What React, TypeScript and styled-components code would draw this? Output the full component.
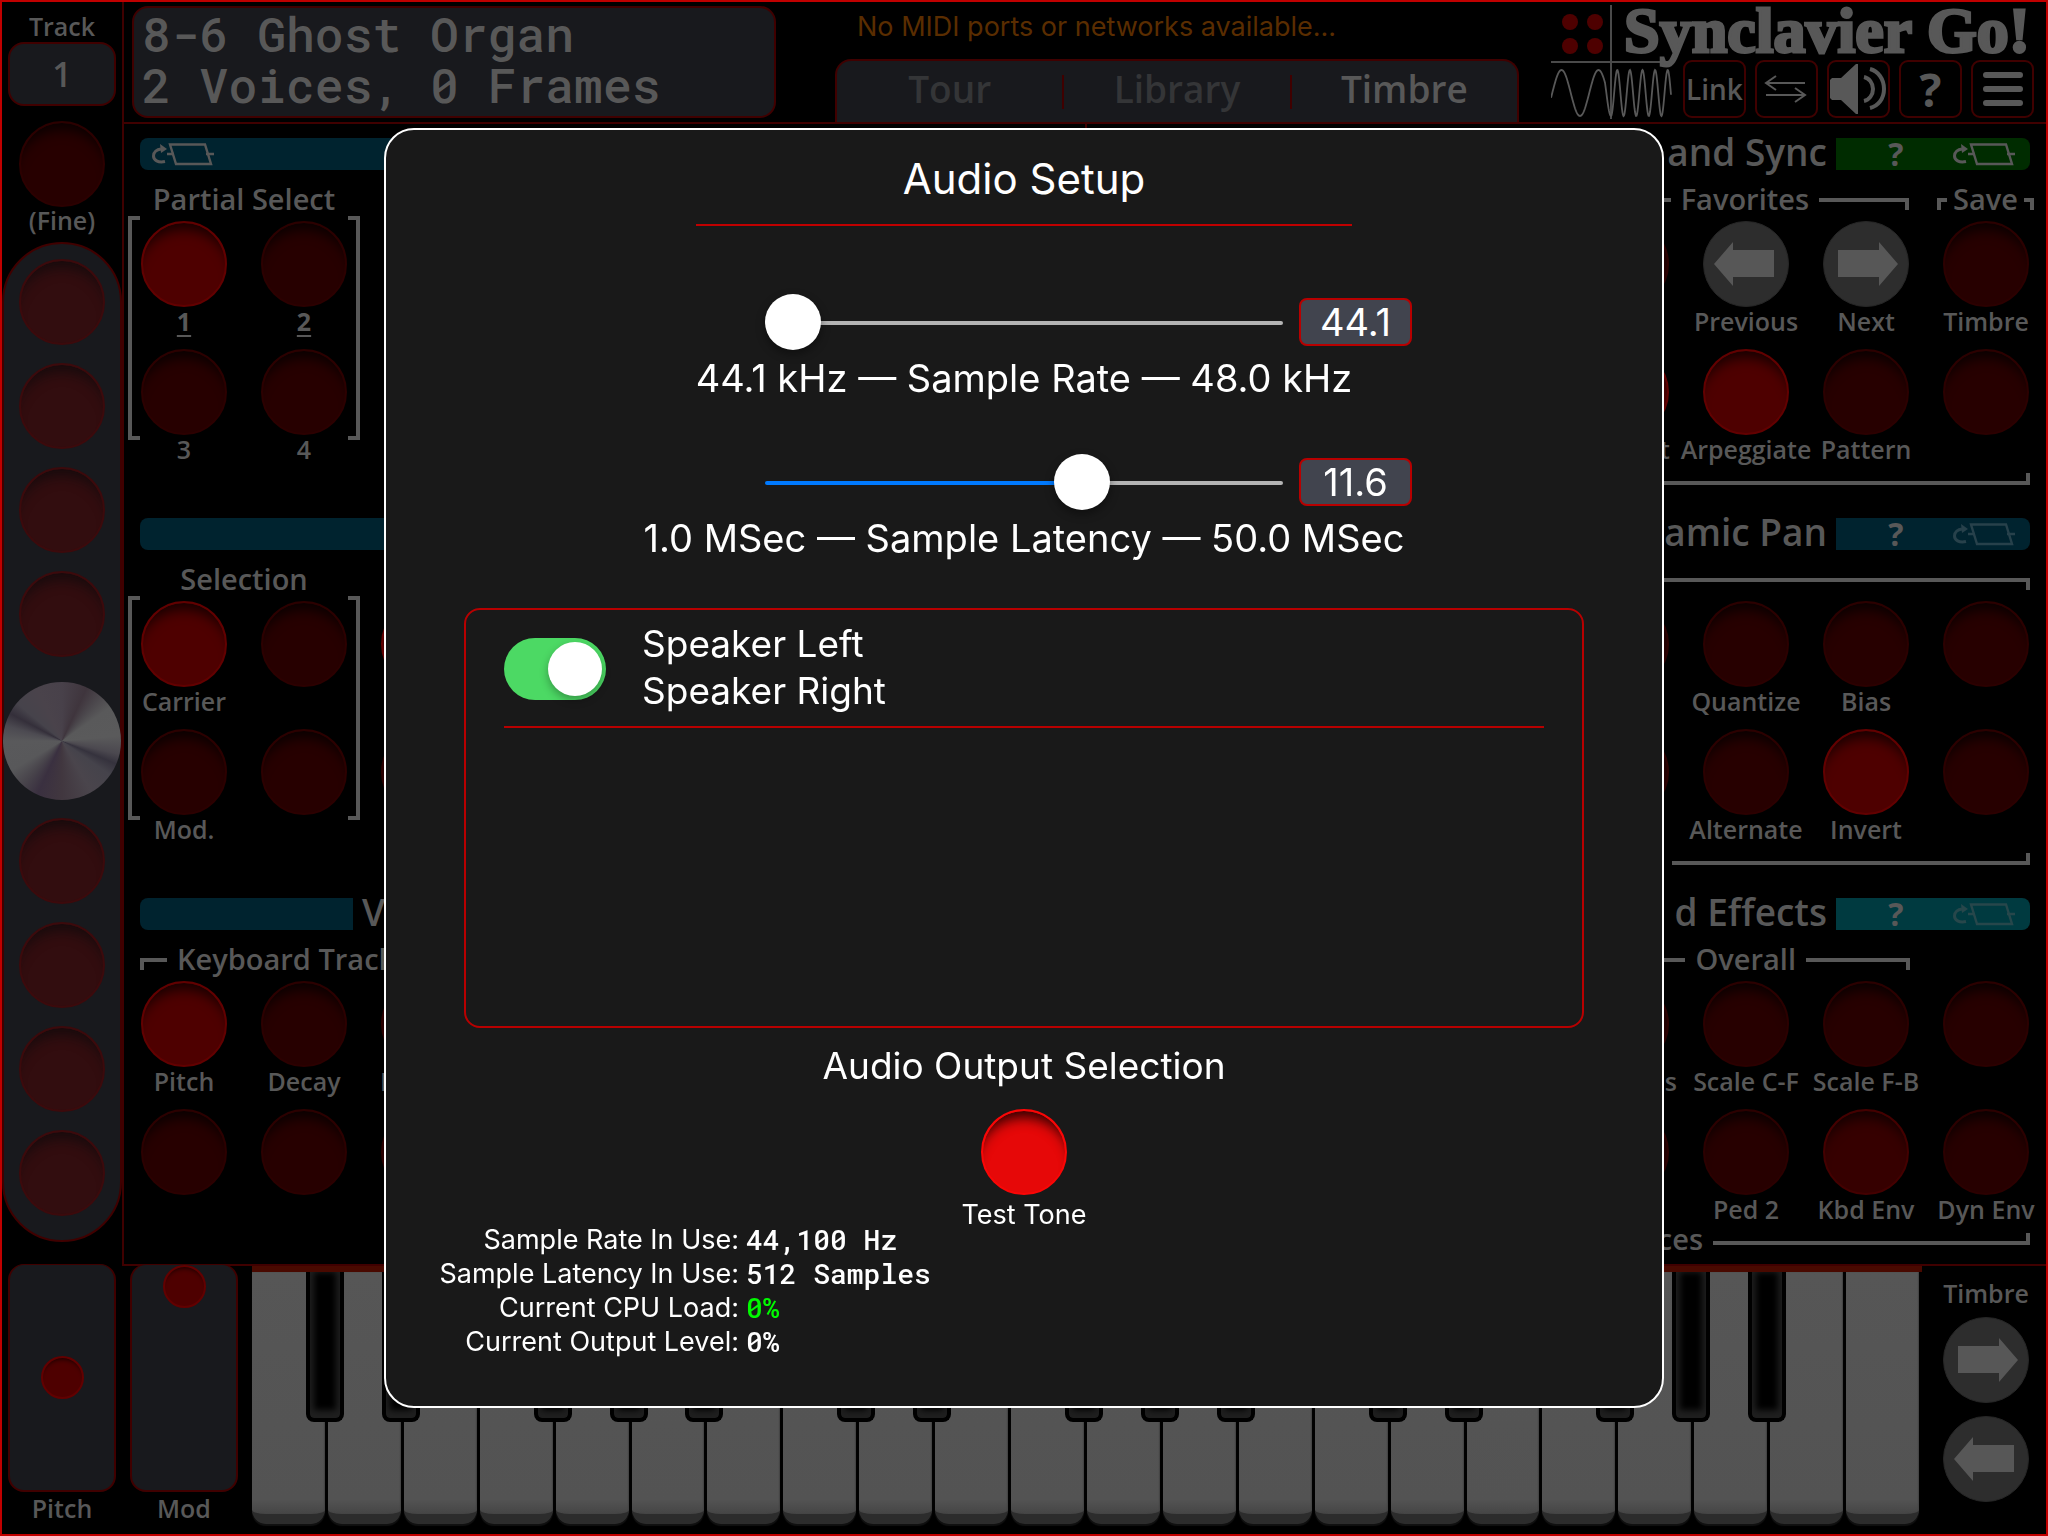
import React, { useState } from "react";
import styled, { createGlobalStyle, css } from "styled-components";

const ink = "#585858";
const rim = "#400000";
const slate = "#18191d";
const redLine = "#c00000";

const GlobalStyle = createGlobalStyle`
  *, *::before, *::after { box-sizing: border-box; }
  body { margin: 0; background: #000; font-family: "Open Sans", "Noto Sans", sans-serif; color: ${ink}; }
  button, input { font: inherit; color: inherit; padding: 0; margin: 0; }
  button { background: none; border: 0; cursor: pointer; }
`;

const Frame = styled.div`
  display: flex;
  flex-direction: column;
  min-height: 100vh;
  background: #000;
  border: 2px solid ${redLine};
  font-weight: 600;
`;

const Upper = styled.div`
  display: flex;
`;

/* ---------- lamp buttons ---------- */

type Tone = "off" | "dim" | "on" | "ribbon" | "live";

const tones: Record<Tone, { face: string; edge: string; shade: string }> = {
  off: { face: "#270000", edge: "#2c0000", shade: "rgba(0, 0, 0, 0.8)" },
  dim: { face: "#360000", edge: "#440000", shade: "rgba(0, 0, 0, 0.7)" },
  on: { face: "#4e0000", edge: "#620000", shade: "rgba(0, 0, 0, 0.75)" },
  ribbon: { face: "#320d0f", edge: "#3c0a0c", shade: "rgba(10, 10, 12, 0.7)" },
  live: { face: "#e60808", edge: "#fa0606", shade: "rgba(20, 0, 0, 0.9)" },
};

const Lamp = styled.button<{ $tone: Tone; $small?: boolean }>`
  flex: none;
  width: ${(p) => (p.$small ? 43 : 86)}px;
  height: ${(p) => (p.$small ? 43 : 86)}px;
  border-radius: 50%;
  border: 2px solid ${(p) => tones[p.$tone].edge};
  background: ${(p) => tones[p.$tone].face};
  box-shadow: ${(p) => (p.$small ? "inset 0 5px 5px -4px" : "inset 0 15px 13px -9px")}
    ${(p) => tones[p.$tone].shade};
`;

const RoundButton = styled.button`
  flex: none;
  display: grid;
  place-items: center;
  width: 86px;
  height: 86px;
  border-radius: 50%;
  background: #2d2d2d;
  border: 1px solid #262626;
`;

function Arrow({ back }: { back?: boolean }) {
  return (
    <svg width="84" height="84" viewBox="-42 -42 84 84" aria-hidden="true">
      <path
        d={
          back
            ? "M-32 0L-13 -22V-14H28V13H-13V22Z"
            : "M32 0L13 -22V-14H-28V13H13V22Z"
        }
        fill="#575757"
      />
    </svg>
  );
}

/* ---------- sidebar ---------- */

const Sidebar = styled.aside`
  flex: none;
  display: flex;
  flex-direction: column;
  align-items: center;
  width: 122px;
  padding: 8px 0 24px;
  border-right: 2px solid ${rim};
  font-size: 25px;
`;

const TrackLabel = styled.label`
  display: flex;
  flex-direction: column;
  align-items: center;
  line-height: 32px;
`;

const TrackBox = styled.button`
  width: 108px;
  height: 64px;
  margin-bottom: 15px;
  border: 2px solid ${rim};
  border-radius: 16px;
  background: ${slate};
  font-size: 34px;
`;

const FineLabel = styled.label`
  display: flex;
  flex-direction: column;
  align-items: center;
  line-height: 26px;
  margin-bottom: 9px;
`;

const Ribbon = styled.div`
  flex: 1;
  width: 120px;
  display: flex;
  flex-direction: column;
  align-items: center;
  justify-content: space-between;
  padding: 15px 0 24px;
  border: 2px solid ${rim};
  border-radius: 60px;
  background: ${slate};
`;

const Knob = styled.button`
  flex: none;
  width: 118px;
  height: 118px;
  margin-top: 6px;
  border-radius: 50%;
  background: conic-gradient(
    from 0deg,
    #48414a 0deg,
    #3f353d 25deg,
    #4b474c 40deg,
    #59595a 55deg,
    #5a5a5b 85deg,
    #4b484f 103deg,
    #35323d 113deg,
    #45434b 125deg,
    #4a454c 150deg,
    #41373f 180deg,
    #3a3040 205deg,
    #48444b 222deg,
    #58585a 240deg,
    #59595b 270deg,
    #4c4a51 285deg,
    #342f3a 298deg,
    #46434b 310deg,
    #4a434b 335deg,
    #48414a 360deg
  );
`;

/* ---------- header ---------- */

const Console = styled.div`
  flex: 1;
  min-width: 0;
  border-bottom: 2px solid ${rim};
`;

const Header = styled.header`
  display: flex;
  height: 122px;
  padding: 0 12px 0 8px;
  border-bottom: 2px solid ${rim};
`;

const Display = styled.div`
  flex: 0 1 644px;
  height: 112px;
  margin-top: 4px;
  padding: 0 8px;
  border: 2px solid ${rim};
  border-radius: 16px;
  background: ${slate};
  font: 500 48px/51px "Roboto Mono", "DejaVu Sans Mono", monospace;
  white-space: pre;
`;

const Middle = styled.div`
  flex: 0 1 684px;
  display: flex;
  flex-direction: column;
  justify-content: space-between;
  margin-left: 59px;
  padding-top: 8px;
`;

const Notice = styled.p`
  margin: 0 0 0 22px;
  font: 400 27px/34px Inter, "Liberation Sans", sans-serif;
  color: #5a2d00;
`;

const Tabs = styled.nav`
  display: flex;
  align-items: center;
  height: 63px;
  border: 2px solid ${rim};
  border-bottom: 0;
  border-radius: 16px 16px 0 0;
  background: ${slate};
`;

const Tab = styled.button<{ $active?: boolean }>`
  flex: 1;
  height: 34px;
  padding-bottom: 6px;
  line-height: 28px;
  font-size: 37px;
  color: ${(p) => (p.$active ? ink : "#343537")};

  & + & {
    border-left: 2px solid ${rim};
  }
`;

const Brand = styled.div`
  display: grid;
  grid-template-columns: 132px auto;
  grid-template-rows: 58px 58px;
  margin-left: auto;
`;

const Mark = styled.svg`
  grid-area: 1 / 1 / 3 / 2;
`;

const Name = styled.div`
  grid-area: 1 / 1 / 2 / 3;
  justify-self: end;
  padding-right: 4px;
  font: 700 64px/58px "Liberation Serif", serif;
  -webkit-text-stroke: 3px ${ink};
  white-space: nowrap;
`;

const Tools = styled.div`
  grid-area: 2 / 2 / 3 / 3;
  display: flex;
  gap: 9px;
`;

const Tool = styled.button<{ $size?: number }>`
  display: grid;
  place-items: center;
  width: 63px;
  height: 58px;
  border: 2px solid ${rim};
  border-radius: 9px;
  font-size: ${(p) => p.$size ?? 28}px;
  line-height: 52px;
  font-weight: ${(p) => (p.$size ? 700 : 600)};
`;

const wave = (() => {
  let d = "";
  for (let x = 0; x <= 120; x += 0.5) {
    const blend = x > 54 && x < 60 ? 0 : 1;
    const phase = x < 60 ? (x - 10.5) / 37 : 0.5 + (x - 60) / 12.6;
    const y = blend
      ? 91 - 23 * Math.cos(2 * Math.PI * phase)
      : 91 - 23 * Math.cos(2 * Math.PI * (1.176 + ((x - 54) / 6) * 0.324));
    d += `${x ? "L" : "M"}${x} ${y.toFixed(2)}`;
  }
  return d;
})();

function BrandMark() {
  return (
    <Mark width="132" height="118" viewBox="0 0 132 118" aria-hidden="true">
      <g fill="#4e0000">
        <circle cx="19" cy="20" r="8" />
        <circle cx="44" cy="20" r="8" />
        <circle cx="19" cy="44" r="8" />
        <circle cx="44" cy="44" r="8" />
      </g>
      <path d="M60 3V117M0 60H116" stroke="#4a4a4a" strokeWidth="2" />
      <path d={wave} fill="none" stroke={ink} strokeWidth="1.8" />
    </Mark>
  );
}

function SwapIcon() {
  return (
    <svg width="59" height="54" viewBox="2 2 59 54" fill="none" stroke={ink} strokeWidth="2">
      <path d="M50 23H11M21 16L11 23L21 30M11 35H50M40 28L50 35L40 42" />
    </svg>
  );
}

function SpeakerIcon() {
  return (
    <svg width="59" height="54" viewBox="2 2 59 54">
      <path d="M5 18H14L29 4H31V54H29L14 40H5L3 38V20Z" fill={ink} />
      <path
        d="M37 17C42 18 46 23 46 29S42 40 37 41M43 9C51 11 57 19 57 29S51 46 43 48"
        fill="none"
        stroke={ink}
        strokeWidth="4"
      />
    </svg>
  );
}

function MenuIcon() {
  return (
    <svg width="59" height="54" viewBox="2 2 59 54">
      <path d="M15 15H49M15 29H49M15 43H49" stroke={ink} strokeWidth="6" strokeLinecap="round" />
    </svg>
  );
}

/* ---------- panels ---------- */

const Panels = styled.main`
  display: grid;
  grid-template-columns: 1fr 1fr;
`;

const Panel = styled.div`
  min-width: 0;

  & + & {
    border-left: 2px solid ${rim};
  }
`;

const Section = styled.section<{ $end?: boolean }>`
  display: flex;
  flex-direction: column;
  height: 380px;
  padding-top: 14px;
  align-items: ${(p) => (p.$end ? "flex-end" : "flex-start")};
`;

const TitleRow = styled.div<{ $end?: boolean }>`
  display: flex;
  align-items: center;
  align-self: stretch;
  gap: 9px;
  height: 32px;
  padding: 0 16px;
  justify-content: ${(p) => (p.$end ? "flex-end" : "flex-start")};
`;

const Title = styled.h2`
  margin: 0;
  padding-bottom: 4px;
  font-size: 37px;
  line-height: 28px;
  font-weight: 600;
  white-space: nowrap;
`;

const Bar = styled.div<{ $color: string; $side: "left" | "right"; $wide?: boolean }>`
  display: flex;
  align-items: center;
  flex: ${(p) => (p.$wide ? "1" : "none")};
  height: 32px;
  background: ${(p) => p.$color};
  ${(p) =>
    p.$side === "left"
      ? css`
          width: 213px;
          padding-left: 12px;
          border-radius: 8px 0 0 8px;
        `
      : css`
          width: 194px;
          padding: 0 15px 0 40px;
          justify-content: space-between;
          border-radius: 0 8px 8px 0;
        `}
`;

const BarButton = styled.button`
  display: grid;
  place-items: center;
  min-width: 40px;
  height: 32px;
  font-size: 32px;
  line-height: 32px;
  font-weight: 700;
`;

function FlipIcon({ color = ink }: { color?: string }) {
  return (
    <svg width="62" height="23" viewBox="0 0 62 23" fill="none" stroke={color} strokeWidth="2.4">
      <path d="M18 1.5H53L59 21H24Z" />
      <path d="M15 11H22M54 11H62" />
      <path d="M13 18.5C6 20 1.5 17 1.5 13C1.5 9 5 6.5 9 6" strokeWidth="3" />
      <path d="M8 1L15 6L9 10Z" fill={color} stroke="none" />
    </svg>
  );
}

const CaptionRow = styled.div<{ $padEnd?: number; $padStart?: number }>`
  display: flex;
  align-items: center;
  gap: 10px;
  width: 480px;
  height: 51px;
  padding-top: 7px;
  padding-left: ${(p) => p.$padStart ?? 0}px;
  padding-right: ${(p) => p.$padEnd ?? 0}px;
  font-size: 29px;
  line-height: 34px;
  white-space: nowrap;
`;

const PairCaption = styled(CaptionRow)`
  width: 240px;
  justify-content: center;
`;

const Rule = styled.span<{ $w?: number; $at: "left" | "right"; $up?: boolean }>`
  flex: ${(p) => (p.$w ? "none" : "1")};
  width: ${(p) => (p.$w ? `${p.$w}px` : "auto")};
  height: 12px;
  margin-top: ${(p) => (p.$up ? 0 : 10)}px;
  ${(p) => (p.$up ? "border-bottom" : "border-top")}: 4px solid ${ink};
  ${(p) => (p.$at === "left" ? "border-left" : "border-right")}: 4px solid ${ink};
`;

const Favorites = styled.div`
  flex: 1;
  display: flex;
  align-items: center;
  gap: 10px;
  margin-right: 18px;
`;

const Save = styled.div`
  display: flex;
  align-items: center;
  gap: 6px;
`;

const Pads = styled.div<{ $cols: number }>`
  display: grid;
  grid-template-columns: repeat(${(p) => p.$cols}, 120px);
  grid-auto-rows: 118px;
  row-gap: 10px;
`;

const Bracketed = styled.div`
  position: relative;

  &::before,
  &::after {
    content: "";
    position: absolute;
    top: -5px;
    width: 12px;
    height: 224px;
    border: 4px solid ${ink};
  }
  &::before {
    left: 4px;
    border-right: 0;
  }
  &::after {
    left: 224px;
    border-left: 0;
  }
`;

const Cell = styled.label<{ $align?: "start" | "end"; $pad?: number }>`
  display: flex;
  flex-direction: column;
  align-items: center;
  font-size: 25px;
  line-height: 28px;
  white-space: nowrap;

  & > span {
    align-self: ${(p) => (p.$align === "start" ? "flex-start" : p.$align === "end" ? "flex-end" : "center")};
    padding: 0 ${(p) => p.$pad ?? 0}px;
  }
`;

const Underlined = styled.u`
  font-weight: 700;
  text-underline-offset: 4px;
`;

const Footer = styled.div`
  display: flex;
  align-items: center;
  gap: 10px;
  height: 12px;
  margin-top: 6px;
  padding-right: 16px;
  font-size: 29px;
  line-height: 12px;
`;

interface PadSpec {
  text?: React.ReactNode;
  tone?: Tone;
  arrow?: "back" | "next";
  align?: "start" | "end";
  pad?: number;
}

function PadGrid({ cols, items }: { cols: number; items: PadSpec[] }) {
  return (
    <Pads $cols={cols}>
      {items.map((it, i) => (
        <Cell key={i} $align={it.align} $pad={it.pad}>
          {it.arrow ? (
            <RoundButton>
              <Arrow back={it.arrow === "back"} />
            </RoundButton>
          ) : (
            <Lamp $tone={it.tone ?? "off"} />
          )}
          {it.text && <span>{it.text}</span>}
        </Cell>
      ))}
    </Pads>
  );
}

/* ---------- lower deck ---------- */

const Lower = styled.div`
  flex: 1;
  display: flex;
  gap: 2px;
  min-height: 268px;
`;

const Wheel = styled.label`
  flex: none;
  display: flex;
  flex-direction: column;
  align-items: center;
  width: 120px;
  margin-top: -2px;
  font-size: 25px;
  line-height: 32px;
`;

const WheelPad = styled.div<{ $top?: boolean }>`
  display: flex;
  justify-content: center;
  align-items: ${(p) => (p.$top ? "flex-start" : "center")};
  width: 108px;
  height: 228px;
  border: 2px solid ${rim};
  border-top-width: 1px;
  border-radius: 16px;
  background: ${slate};
`;

const Keyboard = styled.div`
  flex: 1;
  display: grid;
  grid-template-columns: repeat(22, 1fr);
  height: 258px;
  margin: 0 2px 0 6px;
  border-top: 6px solid #490900;
`;

const KeySlot = styled.div`
  position: relative;
  display: flex;
  padding-right: 3px;
`;

const WhiteKey = styled.button`
  flex: 1;
  border-radius: 0 0 14px 14px;
  border-bottom: 10px solid #2c2c2c;
  background: linear-gradient(#565656, #535353 94%, #454545);
  box-shadow: inset -1px 0 1px #444, 0 2px 1px #111;
`;

const BlackKey = styled.button`
  position: absolute;
  z-index: 1;
  top: 0;
  right: -16px;
  width: 38px;
  height: 150px;
  border: 4px solid #000;
  border-top: 0;
  border-radius: 0 0 8px 8px;
  background: #000;
  box-shadow: inset 0 -4px 6px 4px #1f1f1f;
`;

const Nav = styled.div`
  flex: none;
  display: flex;
  flex-direction: column;
  align-items: center;
  gap: 13px;
  width: 120px;
  padding-top: 16px;
  font-size: 25px;
  line-height: 22px;
`;

const blackAfter = new Set([1, 2, 4, 5, 6, 8, 9, 11, 12, 13, 15, 16, 18, 19, 20]);

/* ---------- audio setup dialog ---------- */

const Overlay = styled.div`
  position: fixed;
  inset: 0;
  z-index: 2;
  display: grid;
  place-items: center;
`;

const Dialog = styled.div`
  display: flex;
  flex-direction: column;
  align-items: center;
  width: min(1280px, 100%);
  min-height: 1280px;
  padding: 24px 0 46px;
  border: 2px solid #fff;
  border-radius: 30px;
  background: #191919;
  color: #fff;
  font: 400 37px/48px Inter, "Liberation Sans", sans-serif;
`;

const Heading = styled.h1`
  margin: 0;
  width: 656px;
  padding-bottom: 20px;
  border-bottom: 2px solid ${redLine};
  font-size: 42px;
  line-height: 50px;
  font-weight: 400;
  text-align: center;
`;

const SliderBlock = styled.div`
  align-self: stretch;
  display: grid;
  grid-template-columns: 1fr 518px 1fr;
  grid-template-rows: 48px 48px;
  row-gap: 8px;
  column-gap: 16px;
  align-items: center;
  margin-top: 56px;

  ${Heading} + & {
    margin-top: 72px;
  }
`;

const Slider = styled.input<{ $fill: number }>`
  grid-area: 1 / 2;
  appearance: none;
  width: 100%;
  height: 60px;
  padding-top: 2px;
  background: transparent;

  &::-webkit-slider-runnable-track {
    height: 4px;
    border-radius: 2px;
    background: linear-gradient(to right, #007aff ${(p) => p.$fill}%, #b4b4b4 ${(p) => p.$fill}%);
  }
  &::-webkit-slider-thumb {
    appearance: none;
    width: 56px;
    height: 56px;
    margin-top: -27px;
    border-radius: 50%;
    background: #fff;
    box-shadow: 0 4px 10px rgba(0, 0, 0, 0.4);
  }
`;

const Value = styled.input`
  grid-area: 1 / 3;
  width: 113px;
  height: 48px;
  border: 2px solid #b80000;
  border-radius: 8px;
  background: #41444e;
  font-size: 38px;
  text-align: center;
`;

const SliderLabel = styled.label`
  grid-area: 2 / 1 / 3 / 4;
  font-size: 38px;
  text-align: center;
`;

const OutputBox = styled.div`
  width: 1120px;
  max-width: 90%;
  height: 420px;
  margin-top: 46px;
  padding: 10px 38px;
  border: 2px solid #b80000;
  border-radius: 16px;
`;

const OutputRow = styled.label`
  display: flex;
  align-items: center;
  gap: 36px;
  padding-bottom: 12px;
  border-bottom: 2px solid #b80000;
  line-height: 47px;
`;

const Switch = styled.input`
  appearance: none;
  flex: none;
  display: flex;
  justify-content: flex-end;
  width: 102px;
  height: 62px;
  padding: 4px;
  border-radius: 31px;
  background: #4cd964;

  ${OutputRow} & {
    margin-top: 4px;
  }

  &::before {
    content: "";
    width: 54px;
    height: 54px;
    border-radius: 50%;
    background: #fff;
    box-shadow: 0 4px 8px rgba(0, 0, 0, 0.3);
  }
  &:not(:checked) {
    justify-content: flex-start;
    background: #555;
  }
`;

const Lines = styled.span`
  white-space: pre-line;
`;

const Caption = styled.h2`
  margin: 14px 0 19px;
  font: inherit;
`;

const TestTone = styled.label`
  display: flex;
  flex-direction: column;
  align-items: center;
  gap: 12px;
  font-size: 27px;
  line-height: 16px;
`;

const Stats = styled.dl`
  align-self: stretch;
  display: grid;
  grid-template-columns: 353px auto;
  column-gap: 7px;
  margin: 0;
  font-size: 27px;
  line-height: 34px;

  dt {
    text-align: right;
  }
  dd {
    margin: 0;
    font: 500 28px/34px "Roboto Mono", "DejaVu Sans Mono", monospace;
  }
`;

const Load = styled.dd`
  color: #00f900;
`;

export default function App() {
  const [rate, setRate] = useState(0);
  const [latency, setLatency] = useState(62.5);

  return (
    <>
      <GlobalStyle />
      <Frame>
        <Upper>
          <Sidebar>
            <TrackLabel>
              Track
              <TrackBox>1</TrackBox>
            </TrackLabel>
            <FineLabel>
              <Lamp $tone="off" />
              (Fine)
            </FineLabel>
            <Ribbon>
              {[0, 1, 2, 3].map((n) => (
                <Lamp key={n} $tone="ribbon" />
              ))}
              <Knob />
              {[4, 5, 6, 7].map((n) => (
                <Lamp key={n} $tone="ribbon" />
              ))}
            </Ribbon>
          </Sidebar>

          <Console>
            <Header>
              <Display>{"8-6 Ghost Organ\n2 Voices, 0 Frames"}</Display>
              <Middle>
                <Notice>No MIDI ports or networks available...</Notice>
                <Tabs>
                  <Tab>Tour</Tab>
                  <Tab>Library</Tab>
                  <Tab $active>Timbre</Tab>
                </Tabs>
              </Middle>
              <Brand>
                <BrandMark />
                <Name>Synclavier Go!</Name>
                <Tools>
                  <Tool>Link</Tool>
                  <Tool><SwapIcon /></Tool>
                  <Tool><SpeakerIcon /></Tool>
                  <Tool $size={46}>?</Tool>
                  <Tool><MenuIcon /></Tool>
                </Tools>
              </Brand>
            </Header>

            <Panels>
              <Panel>
                <Section>
                  <TitleRow>
                    <Bar $color="#00232f" $side="left" $wide>
                      <BarButton><FlipIcon /></BarButton>
                    </Bar>
                  </TitleRow>
                  <PairCaption>Partial Select</PairCaption>
                  <Bracketed>
                    <PadGrid
                      cols={2}
                      items={[
                        { text: <Underlined>1</Underlined>, tone: "on" },
                        { text: <Underlined>2</Underlined> },
                        { text: "3" },
                        { text: "4" },
                      ]}
                    />
                  </Bracketed>
                </Section>
                <Section>
                  <TitleRow>
                    <Bar $color="#00232f" $side="left" $wide />
                  </TitleRow>
                  <PairCaption>Selection</PairCaption>
                  <Bracketed>
                    <PadGrid
                      cols={3}
                      items={[
                        { text: "Carrier", tone: "on" },
                        {},
                        { tone: "on" },
                        { text: "Mod." },
                        {},
                        {},
                      ]}
                    />
                  </Bracketed>
                </Section>
                <Section>
                  <TitleRow>
                    <Bar $color="#00232f" $side="left" />
                    <Title>V</Title>
                  </TitleRow>
                  <CaptionRow $padStart={16}>
                    <Rule $w={27} $at="left" />
                    Keyboard Track
                  </CaptionRow>
                  <PadGrid
                    cols={3}
                    items={[
                      { text: "Pitch", tone: "on" },
                      { text: "Decay" },
                      { text: "I", align: "start", pad: 16 },
                      {},
                      {},
                      {},
                    ]}
                  />
                </Section>
              </Panel>

              <Panel>
                <Section $end>
                  <TitleRow $end>
                    <Title>and Sync</Title>
                    <Bar $color="#002c00" $side="right">
                      <BarButton>?</BarButton>
                      <BarButton><FlipIcon /></BarButton>
                    </Bar>
                  </TitleRow>
                  <CaptionRow $padEnd={12}>
                    <Favorites>
                      <Rule $at="left" />
                      Favorites
                      <Rule $w={90} $at="right" />
                    </Favorites>
                    <Save>
                      <Rule $w={10} $at="left" />
                      Save
                      <Rule $w={10} $at="right" />
                    </Save>
                  </CaptionRow>
                  <PadGrid
                    cols={4}
                    items={[
                      {},
                      { text: "Previous", arrow: "back" },
                      { text: "Next", arrow: "next" },
                      { text: "Timbre" },
                      { text: "t", tone: "on", align: "end", pad: 16 },
                      { text: "Arpeggiate", tone: "on" },
                      { text: "Pattern" },
                      {},
                    ]}
                  />
                  <Footer>
                    <Rule $w={460} $at="right" $up />
                  </Footer>
                </Section>
                <Section $end>
                  <TitleRow $end>
                    <Title>amic Pan</Title>
                    <Bar $color="#00232f" $side="right">
                      <BarButton>?</BarButton>
                      <BarButton><FlipIcon color="#27414b" /></BarButton>
                    </Bar>
                  </TitleRow>
                  <CaptionRow $padEnd={16}>
                    <Rule $at="right" />
                  </CaptionRow>
                  <PadGrid
                    cols={4}
                    items={[
                      {},
                      { text: "Quantize" },
                      { text: "Bias" },
                      {},
                      {},
                      { text: "Alternate" },
                      { text: "Invert", tone: "on" },
                      {},
                    ]}
                  />
                  <Footer>
                    <Rule $w={358} $at="right" $up />
                  </Footer>
                </Section>
                <Section $end>
                  <TitleRow $end>
                    <Title>d Effects</Title>
                    <Bar $color="#003a40" $side="right">
                      <BarButton>?</BarButton>
                      <BarButton><FlipIcon color="#27474b" /></BarButton>
                    </Bar>
                  </TitleRow>
                  <CaptionRow $padEnd={136}>
                    <Rule $at="left" />
                    Overall
                    <Rule $w={104} $at="right" />
                  </CaptionRow>
                  <PadGrid
                    cols={4}
                    items={[
                      { text: "s", align: "end", pad: 9 },
                      { text: "Scale C-F" },
                      { text: "Scale F-B" },
                      {},
                      {},
                      { text: "Ped 2" },
                      { text: "Kbd Env", tone: "dim" },
                      { text: "Dyn Env" },
                    ]}
                  />
                  <Footer>
                    ces
                    <Rule $w={317} $at="right" $up />
                  </Footer>
                </Section>
              </Panel>
            </Panels>
          </Console>
        </Upper>

        <Lower>
          <Wheel>
            <WheelPad><Lamp $tone="on" $small /></WheelPad>
            Pitch
          </Wheel>
          <Wheel>
            <WheelPad $top><Lamp $tone="on" $small /></WheelPad>
            Mod
          </Wheel>
          <Keyboard>
            {Array.from({ length: 22 }, (_, i) => (
              <KeySlot key={i}>
                <WhiteKey />
                {blackAfter.has(i + 1) && <BlackKey />}
              </KeySlot>
            ))}
          </Keyboard>
          <Nav>
            Timbre
            <RoundButton><Arrow /></RoundButton>
            <RoundButton><Arrow back /></RoundButton>
          </Nav>
        </Lower>
      </Frame>

      <Overlay>
        <Dialog role="dialog" aria-labelledby="setup-title">
          <Heading id="setup-title">Audio Setup</Heading>
          <SliderBlock>
            <Slider
              id="rate"
              type="range"
              $fill={rate}
              value={rate}
              onChange={(e) => setRate(Number(e.target.value))}
            />
            <Value aria-labelledby="rate-label" defaultValue="44.1" />
            <SliderLabel id="rate-label" htmlFor="rate">44.1 kHz — Sample Rate — 48.0 kHz</SliderLabel>
          </SliderBlock>
          <SliderBlock>
            <Slider
              id="latency"
              type="range"
              step="0.5"
              $fill={latency}
              value={latency}
              onChange={(e) => setLatency(Number(e.target.value))}
            />
            <Value aria-labelledby="latency-label" defaultValue="11.6" />
            <SliderLabel id="latency-label" htmlFor="latency">1.0 MSec — Sample Latency — 50.0 MSec</SliderLabel>
          </SliderBlock>
          <OutputBox>
            <OutputRow>
              <Switch type="checkbox" defaultChecked />
              <Lines>{"Speaker Left\nSpeaker Right"}</Lines>
            </OutputRow>
          </OutputBox>
          <Caption>Audio Output Selection</Caption>
          <TestTone>
            <Lamp $tone="live" />
            Test Tone
          </TestTone>
          <Stats>
            <dt>Sample Rate In Use:</dt>
            <dd>44,100 Hz</dd>
            <dt>Sample Latency In Use:</dt>
            <dd>512 Samples</dd>
            <dt>Current CPU Load:</dt>
            <Load>0%</Load>
            <dt>Current Output Level:</dt>
            <dd>0%</dd>
          </Stats>
        </Dialog>
      </Overlay>
    </>
  );
}
